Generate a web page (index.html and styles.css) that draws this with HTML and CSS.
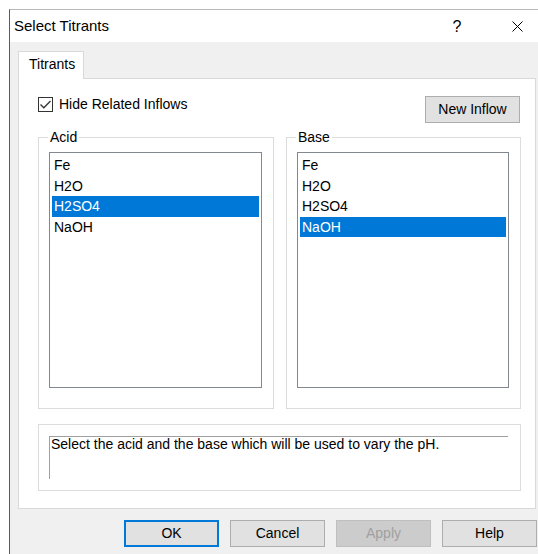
FILE: index.html
```html
<!DOCTYPE html>
<html lang="en">
<head>
<meta charset="utf-8">
<title>Select Titrants</title>
<link rel="stylesheet" href="styles.css">
</head>
<body>
<div class="window">
  <div class="titlebar">
    <span class="title">Select Titrants</span>
    <div class="caption-buttons">
      <span class="cap-btn cap-help">?</span>
      <span class="cap-btn cap-close">
        <svg width="11" height="11" viewBox="0 0 11 11"><path d="M0.5 0.5 L10.5 10.5 M10.5 0.5 L0.5 10.5" stroke="#000" stroke-width="1" fill="none"/></svg>
      </span>
    </div>
  </div>

  <div class="client">
    <div class="tabs">
      <div class="tab tab-active">Titrants</div>
    </div>

    <div class="tab-page">
      <div class="top-row">
        <label class="checkbox">
          <span class="check-box">
            <svg width="13" height="13" viewBox="0 0 13 13"><path d="M1.5 6.5 L4.8 9.8 L11.5 3" stroke="#333" stroke-width="1.3" fill="none"/></svg>
          </span>
          <span>Hide Related Inflows</span>
        </label>
        <button class="btn">New Inflow</button>
      </div>

      <div class="groups">
        <div class="group group-acid">
          <span class="legend">Acid</span>
          <ul class="listbox">
            <li>Fe</li>
            <li>H2O</li>
            <li class="selected">H2SO4</li>
            <li>NaOH</li>
          </ul>
        </div>
        <div class="group group-base">
          <span class="legend">Base</span>
          <ul class="listbox">
            <li>Fe</li>
            <li>H2O</li>
            <li>H2SO4</li>
            <li class="selected">NaOH</li>
          </ul>
        </div>
      </div>

      <div class="group group-desc">
        <div class="desc-text">Select the acid and the base which will be used to vary the pH.</div>
      </div>
    </div>

    <div class="dialog-buttons">
      <button class="btn btn-default">OK</button>
      <button class="btn">Cancel</button>
      <button class="btn btn-disabled">Apply</button>
      <button class="btn">Help</button>
    </div>
  </div>
</div>
</body>
</html>
```

FILE: styles.css
```css
* {
  box-sizing: border-box;
}

html,
body {
  margin: 0;
  padding: 0;
  background: #ffffff;
  overflow: hidden;
  width: 538px;
  height: 554px;
}

body {
  font-family: "Liberation Sans", Arial, sans-serif;
  font-size: 14px;
  color: #000000;
}

/* dialog frame */
.window {
  margin: 9px 0 0 9px;
  width: 531px;
  height: 560px;
  border-left: 1px solid #5b5b5b;
  border-top: 1px solid #b9b9b9;
  background: #f0f0f0;
}

.titlebar {
  height: 32px;
  background: #ffffff;
  display: flex;
  align-items: center;
  padding-left: 4px;
}

.title {
  font-size: 15px;
  line-height: 18px;
}

.caption-buttons {
  margin-left: auto;
  display: flex;
  height: 100%;
}

.cap-btn {
  width: 46px;
  height: 32px;
  display: flex;
  align-items: center;
  justify-content: center;
}

.cap-help {
  font-size: 16px;
  padding-top: 1px;
  margin-right: 14px;
}

.cap-close svg {
  display: block;
}

/* client area */
.client {
  padding: 9px 0 0 8px;
}

.tabs {
  display: flex;
  height: 27px;
}

.tab {
  width: 66px;
  height: 28px;
  border: 1px solid #d9d9d9;
  border-bottom: none;
  background: #ffffff;
  padding-left: 10px;
  line-height: 25px;
  position: relative;
  z-index: 1;
}

.tab-page {
  width: 518px;
  height: 431px;
  border: 1px solid #d9d9d9;
  background: #ffffff;
  padding: 17px 15px 0 19px;
}

.top-row {
  display: flex;
  justify-content: space-between;
  align-items: flex-start;
  height: 27px;
}

.checkbox {
  display: flex;
  align-items: center;
  gap: 6px;
  line-height: 16px;
}

.check-box {
  width: 15px;
  height: 15px;
  border: 1px solid #333333;
  background: #ffffff;
  display: flex;
  align-items: center;
  justify-content: center;
}

.check-box svg {
  display: block;
}

/* push buttons */
.btn {
  width: 95px;
  height: 27px;
  border: 1px solid #adadad;
  background: #e1e1e1;
  font-family: inherit;
  font-size: 14px;
  color: #000000;
  padding: 0;
  margin: 0;
  line-height: 25px;
  text-align: center;
}

.btn-default {
  border: 2px solid #0078d7;
  line-height: 23px;
}

.btn-disabled {
  background: #cccccc;
  border-color: #bfbfbf;
  color: #a0a0a0;
}

/* group boxes */
.groups {
  display: grid;
  grid-template-columns: 236px 235px;
  column-gap: 12px;
  margin-top: 14px;
}

.group {
  border: 1px solid #dcdcdc;
  height: 272px;
  padding: 0 11px 0 10px;
}

.legend {
  display: block;
  width: fit-content;
  height: 16px;
  line-height: 16px;
  margin: -9px 0 0 -1px;
  padding: 0 2px;
  background: #ffffff;
}

.listbox {
  list-style: none;
  margin: 7px 0 0 0;
  height: 236px;
  border: 1px solid #828790;
  padding: 2px 2px;
}

.listbox li {
  height: 20.5px;
  line-height: 20.5px;
  padding-left: 2px;
  white-space: nowrap;
}

.listbox li.selected {
  background: #0078d7;
  color: #ffffff;
}

.group-desc {
  width: 483px;
  height: 67px;
  margin-top: 15px;
  padding: 11px 0 0 10px;
}

.desc-text {
  width: 459px;
  height: 43px;
  border-top: 1px solid #a0a0a0;
  border-left: 1px solid #a0a0a0;
  padding-left: 1px;
  line-height: 15px;
}

/* OK / Cancel / Apply / Help */
.dialog-buttons {
  display: flex;
  gap: 11px;
  margin-top: 11px;
  padding-left: 106px;
}
```
